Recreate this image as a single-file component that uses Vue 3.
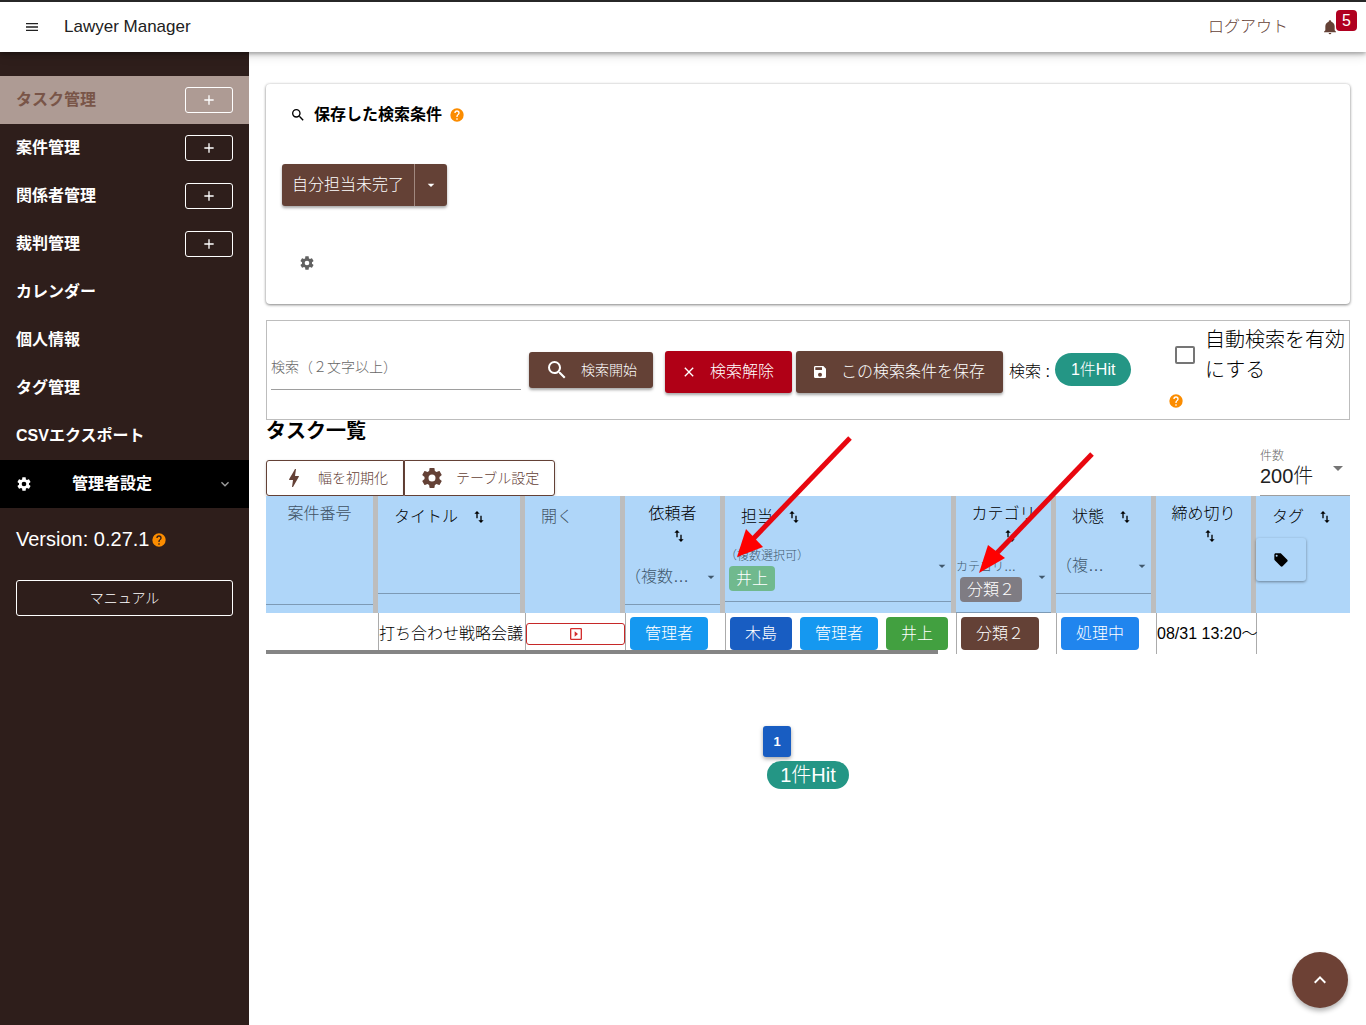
<script setup>
import { ref } from 'vue'

const icons = {
  menu: 'M3,6H21V8H3V6M3,11H21V13H3V11M3,16H21V18H3V16Z',
  plus: 'M19,13H13V19H11V13H5V11H11V5H13V11H19V13Z',
  magnify: 'M9.5,3A6.5,6.5 0 0,1 16,9.5C16,11.11 15.41,12.59 14.44,13.73L14.71,14H15.5L20.5,19L19,20.5L14,15.5V14.71L13.73,14.44C12.59,15.41 11.11,16 9.5,16A6.5,6.5 0 0,1 3,9.5A6.5,6.5 0 0,1 9.5,3M9.5,5C7,5 5,7 5,9.5C5,12 7,14 9.5,14C12,14 14,12 14,9.5C14,7 12,5 9.5,5Z',
  cog: 'M12,15.5A3.5,3.5 0 0,1 8.5,12A3.5,3.5 0 0,1 12,8.5A3.5,3.5 0 0,1 15.5,12A3.5,3.5 0 0,1 12,15.5M19.43,12.97C19.47,12.65 19.5,12.33 19.5,12C19.5,11.67 19.47,11.34 19.43,11L21.54,9.37C21.73,9.22 21.78,8.95 21.66,8.73L19.66,5.27C19.54,5.05 19.27,4.96 19.05,5.05L16.56,6.05C16.04,5.66 15.5,5.32 14.87,5.07L14.5,2.42C14.46,2.18 14.25,2 14,2H10C9.75,2 9.54,2.18 9.5,2.42L9.13,5.07C8.5,5.32 7.96,5.66 7.44,6.05L4.95,5.05C4.73,4.96 4.46,5.05 4.34,5.27L2.34,8.73C2.21,8.95 2.27,9.22 2.46,9.37L4.57,11C4.53,11.34 4.5,11.67 4.5,12C4.5,12.33 4.53,12.65 4.57,12.97L2.46,14.63C2.27,14.78 2.21,15.05 2.34,15.27L4.34,18.73C4.46,18.95 4.73,19.03 4.95,18.95L7.44,17.94C7.96,18.34 8.5,18.68 9.13,18.93L9.5,21.58C9.54,21.82 9.75,22 10,22H14C14.25,22 14.46,21.82 14.5,21.58L14.87,18.93C15.5,18.67 16.04,18.34 16.56,17.94L19.05,18.95C19.27,19.03 19.54,18.95 19.66,18.73L21.66,15.27C21.78,15.05 21.73,14.78 21.54,14.63L19.43,12.97Z',
  help: 'M15.07,11.25L14.17,12.17C13.45,12.89 13,13.5 13,15H11V14.5C11,13.39 11.45,12.39 12.17,11.67L13.41,10.41C13.78,10.05 14,9.55 14,9C14,7.89 13.1,7 12,7A2,2 0 0,0 10,9H8A4,4 0 0,1 12,5A4,4 0 0,1 16,9C16,9.88 15.64,10.67 15.07,11.25M13,19H11V17H13M12,2A10,10 0 0,0 2,12A10,10 0 0,0 12,22A10,10 0 0,0 22,12C22,6.47 17.5,2 12,2Z',
  bell: 'M21,19V20H3V19L5,17V11C5,7.9 7.03,5.17 10,4.29C10,4.19 10,4.1 10,4A2,2 0 0,1 12,2A2,2 0 0,1 14,4C14,4.1 14,4.19 14,4.29C16.97,5.17 19,7.9 19,11V17L21,19M14,21A2,2 0 0,1 12,23A2,2 0 0,1 10,21',
  bolt: 'M11,21H10L11,14H7.5C6.92,14 6.93,13.68 7.12,13.34C8.48,10.94 10.42,7.54 13,3H14L13,10H16.5C16.99,10 17.06,10.33 16.97,10.51L11,21Z',
  save: 'M15,9H5V5H15M12,19A3,3 0 0,1 9,16A3,3 0 0,1 12,13A3,3 0 0,1 15,16A3,3 0 0,1 12,19M17,3H5C3.89,3 3,3.9 3,5V19A2,2 0 0,0 5,21H19A2,2 0 0,0 21,19V7L17,3Z',
  close: 'M19,6.41L17.59,5L12,10.59L6.41,5L5,6.41L10.59,12L5,17.59L6.41,19L12,13.41L17.59,19L19,17.59L13.41,12L19,6.41Z',
  caret: 'M7,10L12,15L17,10H7Z',
  chevronDown: 'M7.41,8.58L12,13.17L16.59,8.58L18,10L12,16L6,10L7.41,8.58Z',
  chevronUp: 'M7.41,15.41L12,10.83L16.59,15.41L18,14L12,8L6,14L7.41,15.41Z',
  sort: 'M9,3L5,7H8V14H10V7H13M16,17V10H14V17H11L15,21L19,17H16Z',
  tag: 'M5.5,7A1.5,1.5 0 0,1 4,5.5A1.5,1.5 0 0,1 5.5,4A1.5,1.5 0 0,1 7,5.5A1.5,1.5 0 0,1 5.5,7M21.41,11.58L12.41,2.58C12.05,2.22 11.55,2 11,2H4C2.89,2 2,2.89 2,4V11C2,11.55 2.22,12.05 2.59,12.41L11.58,21.41C11.95,21.77 12.45,22 13,22C13.55,22 14.05,21.77 14.41,21.41L21.41,14.41C21.78,14.05 22,13.55 22,13C22,12.44 21.77,11.94 21.41,11.58Z',
  play: 'M19,19H5V5H19M19,3H5A2,2 0 0,0 3,5V19A2,2 0 0,0 5,21H19A2,2 0 0,0 21,19V5A2,2 0 0,0 19,3M10,8V16L15,12'
}

const nav = [
  { label: 'タスク管理', add: true, active: true },
  { label: '案件管理', add: true },
  { label: '関係者管理', add: true },
  { label: '裁判管理', add: true },
  { label: 'カレンダー' },
  { label: '個人情報' },
  { label: 'タグ管理' },
  { label: 'CSVエクスポート' }
]

const columns = [
  { key: 'no', label: '案件番号', muted: true, wrap: true, field: 'text' },
  { key: 'title', label: 'タイトル', sort: true, field: 'text' },
  { key: 'open', label: '開く', muted: true },
  { key: 'client', label: '依頼者', sort: true, wrap: true, field: 'select', hint: '（複数…' },
  { key: 'owner', label: '担当', sort: true, field: 'chips', hint: '（複数選択可）', chip: '井上', tone: 'green' },
  { key: 'category', label: 'カテゴリ', sort: true, wrap: true, field: 'chips', hint: 'カテゴリ…', chip: '分類２', tone: 'brown' },
  { key: 'state', label: '状態', sort: true, field: 'select', hint: '（複…' },
  { key: 'due', label: '締め切り', sort: true, wrap: true },
  { key: 'tag', label: 'タグ', sort: true, field: 'tag' }
]

const keyword = ref('')
const autoSearch = ref(false)
</script>

<template>
  <div class="app">
    <header class="bar">
      <button class="plain" type="button" aria-label="メニュー">
        <svg class="i16" viewBox="0 0 24 24"><path :d="icons.menu" /></svg>
      </button>
      <span class="brand">Lawyer Manager</span>
      <a class="logout" href="#">ログアウト</a>
      <button class="plain bell" type="button" aria-label="通知">
        <svg class="i16" viewBox="0 0 24 24"><path :d="icons.bell" /></svg>
        <span class="badge">5</span>
      </button>
    </header>

    <div class="body">
      <nav class="side">
        <div v-for="n in nav" :key="n.label" class="nav-item" :class="{ active: n.active }">
          <a href="#">{{ n.label }}</a>
          <button v-if="n.add" class="add" type="button" :aria-label="n.label + 'を追加'">
            <svg class="i16" viewBox="0 0 24 24"><path :d="icons.plus" /></svg>
          </button>
        </div>
        <button class="admin" type="button">
          <svg class="i16" viewBox="0 0 24 24"><path :d="icons.cog" /></svg>
          <span>管理者設定</span>
          <svg class="i16 faint" viewBox="0 0 24 24"><path :d="icons.chevronDown" /></svg>
        </button>
        <p class="version">Version: 0.27.1<svg class="i16 help" viewBox="0 0 24 24"><path :d="icons.help" /></svg></p>
        <a class="manual" href="#">マニュアル</a>
      </nav>

      <main class="main">
        <section class="card">
          <h2 class="saved-title">
            <svg class="i16" viewBox="0 0 24 24"><path :d="icons.magnify" /></svg>
            <span>保存した検索条件</span>
            <svg class="i16 help" viewBox="0 0 24 24"><path :d="icons.help" /></svg>
          </h2>
          <div class="split">
            <button type="button" class="split-main">自分担当未完了</button>
            <button type="button" class="split-more" aria-label="その他">
              <svg class="i16" viewBox="0 0 24 24"><path :d="icons.caret" /></svg>
            </button>
          </div>
          <button class="plain gear" type="button" aria-label="設定">
            <svg class="i16" viewBox="0 0 24 24"><path :d="icons.cog" /></svg>
          </button>
        </section>

        <form class="search" @submit.prevent>
          <input v-model="keyword" class="keyword" type="text" placeholder="検索（２文字以上）" aria-label="検索（２文字以上）" />
          <button class="btn brown small" type="submit">
            <svg class="i24" viewBox="0 0 24 24"><path :d="icons.magnify" /></svg>検索開始
          </button>
          <button class="btn red" type="reset">
            <svg class="i16" viewBox="0 0 24 24"><path :d="icons.close" /></svg>検索解除
          </button>
          <button class="btn brown save" type="button">
            <svg class="i16" viewBox="0 0 24 24"><path :d="icons.save" /></svg>この検索条件を保存
          </button>
          <span class="result">検索 :</span>
          <span class="hit">1件Hit</span>
          <div class="auto">
            <label class="auto-label">
              <input v-model="autoSearch" type="checkbox" />
              <span>自動検索を有効にする</span>
            </label>
            <svg class="i16 help" viewBox="0 0 24 24"><path :d="icons.help" /></svg>
          </div>
        </form>

        <section class="tasks">
          <h1>タスク一覧</h1>
          <div class="tools">
            <div class="group">
              <button type="button">
                <svg class="i24" viewBox="0 0 24 24"><path :d="icons.bolt" /></svg>幅を初期化
              </button>
              <button type="button">
                <svg class="i24" viewBox="0 0 24 24"><path :d="icons.cog" /></svg>テーブル設定
              </button>
            </div>
            <div class="count">
              <label for="count">件数</label>
              <select id="count"><option>200件</option></select>
              <svg class="i24" viewBox="0 0 24 24"><path :d="icons.caret" /></svg>
            </div>
          </div>

          <div class="table-wrap">
            <table>
              <colgroup>
                <col v-for="c in columns" :key="c.key" :class="'c-' + c.key" />
              </colgroup>
              <thead>
                <tr>
                  <th v-for="c in columns" :key="c.key" scope="col">
                    <div class="head">
                      <div class="head-title" :class="{ wrap: c.wrap, muted: c.muted }">
                        <span>{{ c.label }}</span>
                        <button v-if="c.sort" class="plain" type="button" :aria-label="c.label + 'で並べ替え'">
                          <svg class="i16" viewBox="0 0 24 24"><path :d="icons.sort" /></svg>
                        </button>
                      </div>
                      <input v-if="c.field === 'text'" class="filter" type="text" :aria-label="c.label" />
                      <div v-else-if="c.field === 'select'" class="filter">
                        <select :aria-label="c.label"><option>{{ c.hint }}</option></select>
                        <svg class="i16" viewBox="0 0 24 24"><path :d="icons.caret" /></svg>
                      </div>
                      <button v-else-if="c.field === 'chips'" class="filter picked" type="button">
                        <span class="hint">{{ c.hint }}</span>
                        <span class="mini" :class="c.tone">{{ c.chip }}</span>
                        <svg class="i16" viewBox="0 0 24 24"><path :d="icons.caret" /></svg>
                      </button>
                      <button v-else-if="c.field === 'tag'" class="tag-btn" type="button" aria-label="タグ">
                        <svg class="i16" viewBox="0 0 24 24"><path :d="icons.tag" /></svg>
                      </button>
                    </div>
                  </th>
                </tr>
              </thead>
              <tbody>
                <tr>
                  <td></td>
                  <td>打ち合わせ戦略会議</td>
                  <td>
                    <button class="open" type="button" aria-label="開く">
                      <svg class="i16" viewBox="0 0 24 24"><path :d="icons.play" /></svg>
                    </button>
                  </td>
                  <td><div class="chips"><span class="chip sky">管理者</span></div></td>
                  <td>
                    <div class="chips">
                      <span class="chip navy">木島</span>
                      <span class="chip sky">管理者</span>
                      <span class="chip green">井上</span>
                    </div>
                  </td>
                  <td><div class="chips"><span class="chip brown">分類２</span></div></td>
                  <td><div class="chips"><span class="chip blue">処理中</span></div></td>
                  <td>08/31 13:20〜</td>
                  <td></td>
                </tr>
              </tbody>
            </table>
            <div class="scroll-thumb"></div>
          </div>

          <svg class="arrows" width="840" height="160" viewBox="0 0 840 160" aria-hidden="true">
            <g stroke="#e8070f" stroke-width="5">
              <path d="M584 18L487 119" />
              <path d="M826 34L729 135" />
            </g>
            <g fill="#ff0000">
              <path d="M471 137L480 109L497 127Z" />
              <path d="M713 153L722 125L739 138Z" />
            </g>
          </svg>
        </section>

        <div class="pager">
          <button type="button" class="page">1</button>
          <span class="hit big">1件Hit</span>
        </div>
      </main>
    </div>

    <button class="fab" type="button" aria-label="トップへ戻る">
      <svg class="i24" viewBox="0 0 24 24"><path :d="icons.chevronUp" /></svg>
    </button>
  </div>
</template>

<style>
body {
  margin: 0;
  background: #fff;
}
</style>

<style scoped>
.app,
.app * {
  box-sizing: border-box;
}
.app {
  min-height: 100vh;
  display: flex;
  flex-direction: column;
  font-family: "Liberation Sans", "Noto Sans CJK JP", sans-serif;
  font-size: 16px;
  font-weight: 300;
  line-height: 24px;
  color: #000;
}
button,
input,
select {
  font: inherit;
  color: inherit;
  margin: 0;
}
button {
  cursor: pointer;
  white-space: nowrap;
}
a {
  color: inherit;
  text-decoration: none;
}
svg {
  fill: currentColor;
  flex: none;
  display: block;
}
.i16 {
  width: 16px;
  height: 16px;
}
.i24 {
  width: 24px;
  height: 24px;
}
.help {
  color: #fb8c00;
}
.plain {
  border: 0;
  background: none;
  padding: 0;
}

.bar {
  position: relative;
  z-index: 2;
  display: flex;
  align-items: center;
  height: 52px;
  padding: 0 28px 0 24px;
  border-top: 2px solid #272727;
  background: #fff;
  color: #212121;
  box-shadow: 0 2px 4px rgba(0, 0, 0, 0.3), 0 4px 10px rgba(0, 0, 0, 0.12);
}
.brand {
  margin-left: 24px;
  font-size: 17px;
}
.logout {
  margin-left: auto;
  color: #644136;
}
.bell {
  position: relative;
  margin-left: 34px;
  color: #644136;
}
.badge {
  position: absolute;
  left: 14px;
  top: -9px;
  width: 21px;
  height: 21px;
  border-radius: 4px;
  background: #b00020;
  color: #fff;
  font-size: 16px;
  line-height: 21px;
}

.body {
  flex: 1;
  display: flex;
}
.side {
  flex: none;
  width: 249px;
  padding-top: 24px;
  background: #2e1e1b;
  color: #fff;
}
.nav-item {
  display: flex;
  align-items: center;
  justify-content: space-between;
  height: 48px;
  padding: 0 16px;
  font-weight: 700;
}
.nav-item.active {
  background: #ae9b94;
}
.nav-item.active a {
  color: #795548;
}
.add {
  display: flex;
  align-items: center;
  justify-content: center;
  width: 48px;
  height: 26px;
  padding: 0;
  border: 1px solid #fff;
  border-radius: 3px;
  background: none;
}
.admin {
  display: flex;
  align-items: center;
  width: 100%;
  height: 48px;
  padding: 0 16px;
  border: 0;
  background: #000;
  font-weight: 700;
}
.admin span {
  margin: 0 auto 0 40px;
}
.faint {
  color: #9e9e9e;
}
.version {
  display: flex;
  align-items: center;
  gap: 2px;
  margin: 16px 16px 25px;
  font-size: 20px;
  line-height: 31px;
}
.manual {
  display: block;
  margin: 0 16px;
  border: 1px solid #fff;
  border-radius: 3px;
  font-size: 14px;
  line-height: 34px;
  text-align: center;
}

.main {
  flex: 1;
  min-width: 0;
  padding: 32px 16px 16px 17px;
}
.card {
  padding: 16px;
  min-height: 220px;
  border-radius: 4px;
  box-shadow: 0 1px 3px rgba(0, 0, 0, 0.45), 0 0 3px rgba(0, 0, 0, 0.12);
}
.saved-title {
  display: flex;
  align-items: center;
  margin: 3px 0 37px 8px;
  font-size: 16px;
  font-weight: 700;
}
.saved-title span {
  margin: 0 7px 0 8px;
}
.split {
  display: flex;
  width: max-content;
  border-radius: 3px;
  background: #644136;
  color: #fff;
  box-shadow: 0 2px 3px rgba(0, 0, 0, 0.35);
}
.split button {
  height: 42px;
  border: 0;
  background: none;
}
.split-main {
  padding: 0 10px;
}
.split .split-more {
  padding: 0 8px;
  border-left: 1px solid #a1887f;
}
.gear {
  margin: 49px 17px 0;
  color: #616161;
}

.search {
  display: flex;
  align-items: flex-start;
  min-height: 100px;
  margin-top: 16px;
  padding: 0 4px;
  border: 1px solid #bdbdbd;
}
.keyword {
  width: 250px;
  height: 45px;
  margin: 24px 8px 0 0;
  padding: 0;
  border: 0;
  border-bottom: 1px solid #9e9e9e;
  outline: 0;
  background: none;
  font-size: 14px;
}
.keyword::placeholder {
  color: #666;
  opacity: 1;
}
.btn {
  display: flex;
  align-items: center;
  gap: 13px;
  height: 42px;
  margin-top: 30px;
  padding: 0 18px 0 16px;
  border: 0;
  border-radius: 3px;
  color: #fff;
  box-shadow: 0 2px 3px rgba(0, 0, 0, 0.35);
}
.btn.small {
  gap: 12px;
  height: 36px;
  margin: 31px 12px 0 0;
  padding: 0 16px;
  font-size: 14px;
}
.brown {
  background: #644136;
}
.red {
  background: #b00016;
}
.save {
  margin-left: 4px;
}
.result {
  margin: 39px 5px 0 6px;
  white-space: nowrap;
}
.hit {
  margin-top: 32px;
  padding: 0 16px;
  border-radius: 17px;
  background: #249685;
  color: #fff;
  line-height: 33px;
  white-space: nowrap;
}
.auto {
  width: 177px;
  margin-left: auto;
}
.auto-label {
  display: flex;
  gap: 10px;
  padding: 4px 0 0 7px;
  font-size: 20px;
  line-height: 30px;
}
.auto-label input {
  flex: none;
  appearance: none;
  width: 20px;
  height: 18px;
  margin-top: 21px;
  border: 2px solid #757575;
  border-radius: 2px;
  background: #fff;
}
.auto .help {
  margin-top: 8px;
}

.tasks {
  position: relative;
}
h1 {
  margin: 0;
  font-size: 20px;
  line-height: 22px;
}
.tools {
  display: flex;
  justify-content: space-between;
  align-items: flex-end;
  height: 54px;
}
.group {
  display: flex;
}
.group button {
  display: flex;
  align-items: center;
  gap: 12px;
  height: 36px;
  padding: 0 15px;
  border: 1px solid #644136;
  background: #fff;
  color: #644136;
  font-size: 14px;
  box-shadow: 0 1px 3px rgba(0, 0, 0, 0.2);
}
.group button:first-child {
  border-radius: 3px 0 0 3px;
}
.group button:last-child {
  border-radius: 0 3px 3px 0;
}
.count {
  display: grid;
  grid-template-columns: 66px 24px;
  width: 90px;
  border-bottom: 1px solid #9e9e9e;
  color: #212121;
}
.count label {
  grid-column: 1 / 3;
  color: #666;
  font-size: 12px;
  line-height: 14px;
}
.count select {
  appearance: none;
  height: 32px;
  padding: 0 0 6px;
  border: 0;
  background: none;
  font-size: 20px;
}
.count svg {
  color: #757575;
  margin-top: -7px;
}

.table-wrap {
  position: relative;
}
table {
  width: 100%;
  table-layout: fixed;
  border-collapse: separate;
  border-spacing: 0;
}
.c-no { width: 112px; }
.c-title { width: 147px; }
.c-open,
.c-client,
.c-category,
.c-state,
.c-due { width: 100px; }
.c-owner { width: 231px; }
th {
  height: 117px;
  padding: 0;
  border-right: 5px solid #bdbdbd;
  background: #afd6f9;
  font-weight: 300;
  vertical-align: top;
  text-align: left;
}
th:last-child {
  border-right: 0;
}
.head-title {
  display: flex;
  align-items: center;
  gap: 13px;
  height: 42px;
  padding-left: 16px;
  white-space: nowrap;
}
.head-title.wrap {
  flex-direction: column;
  gap: 0;
  height: 53px;
  padding: 7px 0 0;
  line-height: 22px;
}
.wrap .plain {
  padding: 3px 0 0 12px;
}
.muted {
  color: #3f5263;
}
.filter {
  position: relative;
  display: block;
  width: 100%;
  height: 56px;
  padding: 0;
  border: 0;
  border-bottom: 1px solid #7d9ab5;
  outline: 0;
  background: none;
  color: #40586d;
  text-align: left;
}
.filter select {
  appearance: none;
  width: 100%;
  height: 55px;
  padding: 0;
  border: 0;
  background: none;
}
.filter svg {
  position: absolute;
  right: 1px;
  top: 20px;
}
.picked {
  display: flex;
  flex-direction: column;
  align-items: flex-start;
  justify-content: flex-start;
  height: 64px;
  padding-top: 9px;
}
.hint {
  height: 19px;
  font-size: 12px;
  line-height: 18px;
}
.mini {
  height: 25px;
  margin-left: 4px;
  padding: 0 7px;
  border-radius: 4px;
  color: #fff;
  line-height: 25px;
}
.mini.green {
  background: #70b98e;
}
.mini.brown {
  background: #7f7c83;
}
.tag-btn {
  display: flex;
  align-items: center;
  justify-content: center;
  width: 50px;
  height: 43px;
  padding: 0;
  border: 0;
  border-radius: 3px;
  background: #afd6f9;
  box-shadow: 0 1px 3px rgba(0, 0, 0, 0.4);
}
td {
  height: 41px;
  padding: 0;
  border-left: 1px solid #ababab;
  white-space: nowrap;
}
td:first-child {
  border-left: 0;
}
.open {
  display: flex;
  align-items: center;
  justify-content: center;
  width: 100%;
  height: 22px;
  padding: 0;
  border: 1px solid #c62828;
  border-radius: 3px;
  background: #fff;
  color: #d32f2f;
}
.chips {
  display: flex;
  gap: 8px;
  padding-left: 4px;
}
.chip {
  padding: 0 15px;
  border-radius: 4px;
  color: #fff;
  line-height: 33px;
}
.sky { background: #1598f0; }
.navy { background: #185dc2; }
.green { background: #42a040; }
.blue { background: #2085ee; }
.scroll-thumb {
  position: absolute;
  left: 0;
  bottom: 0;
  width: 62%;
  height: 4px;
  background: #858585;
}
.arrows {
  position: absolute;
  left: 0;
  top: 0;
  fill: none;
  pointer-events: none;
}

.pager {
  display: flex;
  flex-direction: column;
  align-items: flex-start;
  width: max-content;
  margin: 72px auto 0;
}
.page {
  width: 28px;
  height: 31px;
  padding: 0;
  border: 0;
  border-radius: 3px;
  background: #185dc2;
  color: #fff;
  font-size: 13px;
  font-weight: 700;
  box-shadow: 0 2px 4px rgba(0, 0, 0, 0.35);
}
.hit.big {
  margin: 4px 4px 0;
  padding: 0 13px;
  font-size: 20px;
  line-height: 28px;
}

.fab {
  position: fixed;
  right: 18px;
  bottom: 17px;
  display: flex;
  align-items: center;
  justify-content: center;
  width: 56px;
  height: 56px;
  padding: 0;
  border: 0;
  border-radius: 50%;
  background: #6d4135;
  color: #fff;
  box-shadow: 0 3px 5px rgba(0, 0, 0, 0.3);
}
</style>
